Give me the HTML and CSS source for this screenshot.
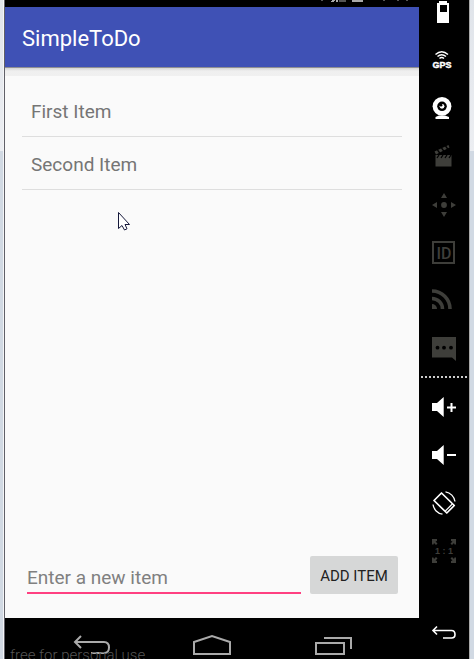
FILE: index.html
```html
<!DOCTYPE html>
<html lang="en">
<head>
<meta charset="utf-8">
<meta name="viewport" content="width=device-width, initial-scale=1">
<title>SimpleToDo</title>
<link rel="stylesheet" href="styles.css">
</head>
<body>
<div class="window">
  <main class="device">
    <div class="status" aria-hidden="true">
      <svg width="100" height="7" viewBox="0 0 100 7">
        <path fill="#555" d="M2 0h2v1h-2zM20 0h7v2h-7zM64 0h2v1h-2zM78 0h2v1h-2zM87 0h2v1h-2z"/>
        <path fill="#aaa" d="M13 0h3v1h-1v1h-3v-1h1zM17 0h2v2h-2zM33 0h11v2h-11z"/>
      </svg>
    </div>
    <header class="appbar"><h1 class="title">SimpleToDo</h1></header>
    <section class="content">
      <ul class="items">
        <li class="item">First Item</li>
        <li class="item">Second Item</li>
      </ul>
      <form class="entry">
        <input class="field" type="text" placeholder="Enter a new item" aria-label="Enter a new item">
        <button class="add" type="button">ADD ITEM</button>
      </form>
      <svg class="cursor" width="14" height="21" viewBox="0 0 14 21" aria-hidden="true">
        <path d="M1.5 1.5V17.5L5 14.5L7.5 19L10 17.8L8 13.5H12.5Z" fill="#fff" stroke="#15183a"/>
      </svg>
    </section>
    <nav class="navbar">
      <button class="navkey" type="button" aria-label="Back">
        <svg width="48" height="41" viewBox="0 0 48 41"><path d="M14 18L8 24L14 30M8.500 24H37Q42 24 42 29.500Q42 35 37 35H24" fill="none" stroke="#aaa" stroke-width="2"/></svg>
      </button>
      <button class="navkey" type="button" aria-label="Home">
        <svg width="48" height="41" viewBox="0 0 48 41"><path d="M6 36V24L24 18L42 24V36Z" fill="none" stroke="#aaa" stroke-width="2"/></svg>
      </button>
      <button class="navkey" type="button" aria-label="Recent apps">
        <svg width="48" height="41" viewBox="0 0 48 41"><path d="M7 25H35V36H7ZM15 20H42V31" fill="none" stroke="#aaa" stroke-width="2"/></svg>
      </button>
      <span class="license">free for personal use</span>
    </nav>
  </main>
  <aside class="rail">
    <button class="tool tool-first" type="button" aria-label="Battery">
      <svg width="50" height="36" viewBox="0 12 50 36"><path fill="#fff" fill-rule="evenodd" d="M20 13h8v2h2v20H18V15h2zM21 17v7h7v-7z"/></svg>
    </button>
    <button class="tool" type="button" aria-label="GPS">
      <svg width="50" height="48" viewBox="0 0 50 48"><g fill="none" stroke="#fff" stroke-width="1.500"><path d="M16.500 18.500Q22.700 13 29 18.500M18.500 20.500Q22.700 17 27 20.500M20.500 22.500Q22.700 20.500 25 22.500"/></g><text class="gps" x="23" y="32" text-anchor="middle">GPS</text></svg>
    </button>
    <button class="tool" type="button" aria-label="Camera">
      <svg width="50" height="48" viewBox="0 0 50 48"><path fill="#fff" d="M16.500 35V33L20 31.500H26L30 33V35Z"/><circle cx="23" cy="22.300" r="9.400" fill="#fff"/><circle cx="23" cy="22.300" r="4.800" fill="#000"/><circle cx="23" cy="22.300" r="2.400" fill="#fff"/><circle cx="22" cy="21.200" r="1.400" fill="#000"/></svg>
    </button>
    <button class="tool" type="button" aria-label="Capture">
      <svg width="50" height="48" viewBox="0 0 50 48"><path fill="#3e3e3a" d="M15.500 19.500L29.500 13L30.500 15.500L17 22.500ZM16.500 23H32.500V34.500H16.500Z"/><path stroke="#000" stroke-width="1.300" d="M18.500 18L21.500 22M22.500 16L25.500 20M26.500 14L29.500 18M20 23L18 26M24 23L22 26M28 23L26 26M32 23L30 26"/></svg>
    </button>
    <button class="tool" type="button" aria-label="Move">
      <svg width="50" height="48" viewBox="0 0 50 48"><circle cx="25" cy="25" r="2.900" fill="#3e3e3a"/><path fill="#3e3e3a" d="M25 13L28 18H22ZM25 37L28 32H22ZM13 25L18 22V28ZM37 25L32 22V28Z"/></svg>
    </button>
    <button class="tool" type="button" aria-label="Identifiers">
      <svg width="50" height="48" viewBox="0 0 50 48"><rect x="14" y="14" width="21" height="21" fill="none" stroke="#3e3e3a" stroke-width="2"/><text class="ident" x="25" y="31" text-anchor="middle">ID</text></svg>
    </button>
    <button class="tool" type="button" aria-label="Network">
      <svg width="50" height="48" viewBox="0 0 50 48"><g fill="none" stroke="#3e3e3a" stroke-width="3.600"><path d="M13 15A18 18 0 0 1 31 33M13 22.500A10.500 10.500 0 0 1 23.500 33"/></g><path fill="#3e3e3a" d="M13 28A5 5 0 0 1 18 33H13Z"/></svg>
    </button>
    <button class="tool" type="button" aria-label="Messages">
      <svg width="50" height="48" viewBox="0 0 50 48"><path fill="#3e3e3a" d="M13 13H37V37L33 33.500H13Z"/><g fill="#000"><circle cx="18.500" cy="23.700" r="1.900"/><circle cx="25" cy="23.700" r="1.900"/><circle cx="32" cy="23.700" r="1.900"/></g></svg>
    </button>
    <div class="divider"></div>
    <button class="tool" type="button" aria-label="Volume up">
      <svg width="50" height="48" viewBox="0 0 50 48"><path fill="#fff" d="M13 20H18L24.700 14V34L18 28H13Z"/><path stroke="#fff" stroke-width="2" d="M28 24.500H37M32.500 20V29"/></svg>
    </button>
    <button class="tool" type="button" aria-label="Volume down">
      <svg width="50" height="48" viewBox="0 0 50 48"><path fill="#fff" d="M13 20H18L24.700 14V34L18 28H13Z"/><path stroke="#fff" stroke-width="2" d="M28 24H37"/></svg>
    </button>
    <button class="tool" type="button" aria-label="Rotate">
      <svg width="50" height="48" viewBox="0 0 50 48"><g fill="none" stroke="#fff" stroke-width="1.700" stroke-linejoin="round"><path d="M15 21.500L22.500 14L35.300 26.500L27.800 34Z"/><path d="M26.300 32L33.300 25" stroke-width="1.200"/><path d="M26.500 12.900A11.300 11.300 0 0 1 36 22.500M14 25.500A11.300 11.300 0 0 0 23.500 35.200" stroke-width="1.300"/></g></svg>
    </button>
    <button class="tool" type="button" aria-label="Actual size">
      <svg width="50" height="48" viewBox="0 0 50 48"><path fill="#3e3e3a" d="M13 12H18V14L16.500 14.500L18.500 16.500L17 18L15 16L14.500 17.500H13ZM37 12H32V14L33.500 14.500L31.500 16.500L33 18L35 16L35.500 17.500H37ZM13 36H18V34L16.500 33.500L18.500 31.500L17 30L15 32L14.500 30.500H13ZM37 36H32V34L33.500 33.500L31.500 31.500L33 30L35 32L35.500 30.500H37Z"/><text class="ratio" x="25" y="27" text-anchor="middle">1 : 1</text></svg>
    </button>
    <button class="tool tool-last" type="button" aria-label="Back">
      <svg width="50" height="48" viewBox="0 0 50 48"><path d="M18 17.500L14 21.500L18 25.500M14 21.500H32.500Q36 21.500 36 25.500Q36 29 32.500 29H24" fill="none" stroke="#fff" stroke-width="1.600"/></svg>
    </button>
  </aside>
</div>
</body>
</html>
```
FILE: styles.css
```css
* {
  box-sizing: border-box;
}

body {
  margin: 0;
  background: linear-gradient(#e0e4ea, #eceef2 151px, #d1d9e3 151px);
  font-family: Roboto, "Liberation Sans", sans-serif;
}

.window {
  display: flex;
  height: 100vh;
  margin: 0 4px 0 3px;
  border-left: 1px solid #f4f5f7;
}

.device {
  flex: 1;
  display: flex;
  flex-direction: column;
  min-width: 0;
  border-left: 1px solid #606068;
  background: #fafafa;
}

.status {
  display: flex;
  justify-content: flex-end;
  height: 7px;
  background: #000;
}

.appbar {
  display: flex;
  align-items: center;
  height: 60px;
  padding: 3px 17px 0;
  background: #3f51b5;
}

.title {
  margin: 0;
  color: #fff;
  font-size: 22px;
  font-weight: 400;
  line-height: 28px;
}

.content {
  position: relative;
  flex: 1;
  display: flex;
  flex-direction: column;
  justify-content: space-between;
  padding: 17px 17px 24px;
  background: linear-gradient(#8f8f92 1px, #d4d4d4 1px, #e6e6e6 3px, #efefef 4px, #f0f0f0 9px, #fafafa 9px);
}

.items {
  margin: 0;
  padding: 0;
  list-style: none;
}

.item {
  height: 53px;
  padding: 0 9px;
  border-bottom: 1px solid #dedede;
  color: #757575;
  font-size: 19px;
  line-height: 56px;
}

.entry {
  display: flex;
  gap: 9px;
  padding: 0 4px 0 5px;
}

.field {
  flex: 1;
  min-width: 0;
  height: 38px;
  padding: 6px 0 0;
  border: 0;
  border-bottom: 2px solid #ff4081;
  background: none;
  color: #212121;
  font: 19px Roboto, "Liberation Sans", sans-serif;
  outline: 0;
}

.field::placeholder {
  color: #808080;
  opacity: 1;
}

.add {
  width: 88px;
  height: 38px;
  padding: 2px 0 0;
  border: 0;
  border-radius: 2px;
  background: #d6d7d7;
  color: #212121;
  font: 15px Roboto, "Liberation Sans", sans-serif;
  white-space: nowrap;
}

.cursor {
  position: absolute;
  left: 112px;
  top: 144px;
}

.navbar {
  position: relative;
  display: flex;
  justify-content: center;
  gap: 73px;
  height: 41px;
  overflow: hidden;
  background: #000;
}

.navkey {
  padding: 0;
  border: 0;
  background: none;
}

.navkey svg,
.tool svg {
  display: block;
}

.license {
  position: absolute;
  left: 5px;
  top: 27px;
  color: #555;
  font-size: 15px;
  font-weight: 300;
  line-height: 20px;
}

.rail {
  display: flex;
  flex-direction: column;
  width: 51px;
  border-right: 1px solid #a8a8a8;
  background: #000;
}

.tool {
  flex: none;
  height: 48px;
  padding: 0;
  border: 0;
  background: none;
}

.tool-first {
  height: 36px;
}

.tool-last {
  margin-top: auto;
  margin-bottom: 2px;
}

.divider {
  flex: none;
  height: 2px;
  margin: 4px 2px 5px;
  background: repeating-linear-gradient(90deg, #ccc 0 2px, #000 2px 4px);
}

.gps {
  fill: #fff;
  stroke: #fff;
  stroke-width: 0.4px;
  font: bold 9px "Liberation Sans", sans-serif;
}

.ident {
  fill: #3e3e3a;
  font: 500 16px Roboto, sans-serif;
}

.ratio {
  fill: #3e3e3a;
  font: bold 9px "Liberation Sans", sans-serif;
}
```
